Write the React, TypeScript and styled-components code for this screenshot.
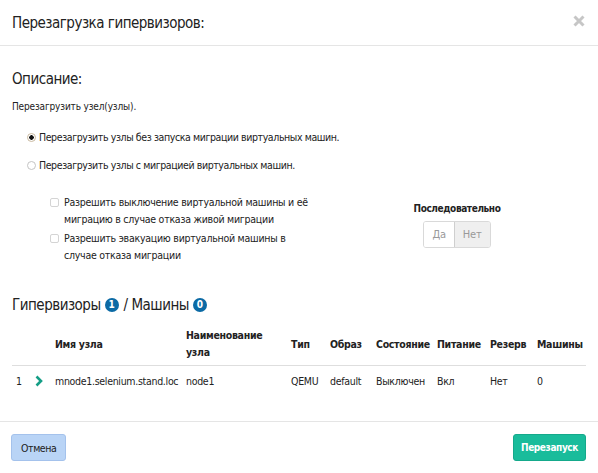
import React, { useState } from "react";
import styled, { createGlobalStyle } from "styled-components";

const FONT = `"Liberation Sans Narrow", "DejaVu Sans Condensed", "Liberation Sans", sans-serif`;

const GlobalStyle = createGlobalStyle`
  html, body {
    margin: 0;
    padding: 0;
    background: #fff;
  }
  body {
    font-family: ${FONT};
    font-stretch: condensed;
    color: #222;
  }
`;

type Node = {
  id: number;
  host: string;
  name: string;
  type: string;
  image: string;
  state: string;
  power: string;
  reserve: string;
  machines: number;
};

const NODES: Node[] = [
  {
    id: 1,
    host: "mnode1.selenium.stand.loc",
    name: "node1",
    type: "QEMU",
    image: "default",
    state: "Выключен",
    power: "Вкл",
    reserve: "Нет",
    machines: 0,
  },
];

const COLUMNS = [19, 20, 131, 105, 39, 46, 61, 53, 47, 53];

const App = () => {
  const [mode, setMode] = useState(0);
  const [sequential, setSequential] = useState(false);
  const [allowOff, setAllowOff] = useState(false);
  const [allowEvac, setAllowEvac] = useState(false);

  return (
    <>
      <GlobalStyle />
      <Modal>
        <Header>
          <Title>Перезагрузка гипервизоров:</Title>
          <CloseButton aria-label="Закрыть">
            <svg width="12" height="12" viewBox="0 0 12 12">
              <path d="M1.5 1.5 L10.5 10.5 M10.5 1.5 L1.5 10.5" stroke="#c6c6c6" strokeWidth="3" />
            </svg>
          </CloseButton>
        </Header>

        <Body>
          <SectionTitle>Описание:</SectionTitle>
          <Description>Перезагрузить узел(узлы).</Description>

          <RadioList>
            <RadioRow onClick={() => setMode(0)}>
              <Radio checked={mode === 0} />
              Перезагрузить узлы без запуска миграции виртуальных машин.
            </RadioRow>
            <RadioRow onClick={() => setMode(1)}>
              <Radio checked={mode === 1} />
              Перезагрузить узлы с миграцией виртуальных машин.
            </RadioRow>
          </RadioList>

          <Options>
            <CheckList>
              <CheckRow onClick={() => setAllowOff(!allowOff)}>
                <Checkbox checked={allowOff} />
                <span>
                  Разрешить выключение виртуальной машины и её
                  <br />
                  миграцию в случае отказа живой миграции
                </span>
              </CheckRow>
              <CheckRow onClick={() => setAllowEvac(!allowEvac)}>
                <Checkbox checked={allowEvac} />
                <span>
                  Разрешить эвакуацию виртуальной машины в
                  <br />
                  случае отказа миграции
                </span>
              </CheckRow>
            </CheckList>

            <Sequence>
              <SequenceLabel>Последовательно</SequenceLabel>
              <Toggle>
                <ToggleButton active={sequential} onClick={() => setSequential(true)}>
                  Да
                </ToggleButton>
                <ToggleButton active={!sequential} onClick={() => setSequential(false)}>
                  Нет
                </ToggleButton>
              </Toggle>
            </Sequence>
          </Options>

          <SectionTitle as="h3" $top={32}>
            Гипервизоры<Badge>1</Badge>/ Машины<Badge>0</Badge>
          </SectionTitle>

          <Table>
            <colgroup>
              {COLUMNS.map((w, i) => (
                <col key={i} style={{ width: w }} />
              ))}
            </colgroup>
            <thead>
              <tr>
                <Th />
                <Th />
                <Th>Имя узла</Th>
                <Th>
                  Наименование
                  <br />
                  узла
                </Th>
                <Th>Тип</Th>
                <Th>Образ</Th>
                <Th>Состояние</Th>
                <Th>Питание</Th>
                <Th>Резерв</Th>
                <Th>Машины</Th>
              </tr>
            </thead>
            <tbody>
              {NODES.map(node => (
                <tr key={node.id}>
                  <Td>{node.id}</Td>
                  <Td>
                    <svg width="8" height="12" viewBox="0 0 8 12">
                      <path d="M1.5 1.5 L6 6 L1.5 10.5" fill="none" stroke="#159e86" strokeWidth="2.6" />
                    </svg>
                  </Td>
                  <Td>{node.host}</Td>
                  <Td>{node.name}</Td>
                  <Td>{node.type}</Td>
                  <Td>{node.image}</Td>
                  <Td>{node.state}</Td>
                  <Td>{node.power}</Td>
                  <Td>{node.reserve}</Td>
                  <Td>{node.machines}</Td>
                </tr>
              ))}
            </tbody>
          </Table>
        </Body>

        <Footer>
          <Button variant="cancel">Отмена</Button>
          <Button variant="primary">Перезапуск</Button>
        </Footer>
      </Modal>
    </>
  );
};

const Modal = styled.div`
  width: 598px;
  height: 473px;
  display: flex;
  flex-direction: column;
  background: #fff;
  box-sizing: border-box;
`;

const Header = styled.div`
  height: 46px;
  box-sizing: border-box;
  padding: 0 13px 0 12px;
  display: flex;
  align-items: center;
  justify-content: space-between;
  border-bottom: 1px solid #e5e5e5;
  flex: none;
`;

const Title = styled.h2`
  margin: 0;
  font-size: 15px;
  letter-spacing: -0.5px;
  font-weight: normal;
  color: #222;
  line-height: 20px;
`;

const CloseButton = styled.button`
  border: none;
  background: none;
  padding: 0;
  margin-top: -4px;
  display: flex;
  cursor: pointer;
`;

const Body = styled.div`
  flex: 1;
  padding: 0 12px;
  display: flex;
  flex-direction: column;
`;

const SectionTitle = styled.h4<{ $top?: number }>`
  margin: ${p => p.$top ?? 23}px 0 0;
  font-size: 15px;
  letter-spacing: -0.5px;
  font-weight: normal;
  line-height: 20px;
  color: #222;
  display: flex;
  align-items: center;
  white-space: pre;
`;

const Description = styled.p`
  margin: 11px 0 0;
  font-size: 10px;
  letter-spacing: -0.15px;
  line-height: 14px;
`;

const RadioList = styled.div`
  margin-top: 16px;
  padding-left: 15px;
  display: flex;
  flex-direction: column;
  gap: 14px;
`;

const RadioRow = styled.label`
  display: flex;
  align-items: center;
  gap: 3px;
  font-size: 10.5px;
  letter-spacing: -0.4px;
  line-height: 14px;
  cursor: pointer;
`;

const Radio = styled.span<{ checked: boolean }>`
  width: 9px;
  height: 9px;
  box-sizing: border-box;
  border-radius: 50%;
  border: 1px solid ${p => (p.checked ? "#c9b9a0" : "#c4c4c4")};
  background: ${p => (p.checked ? "radial-gradient(circle, #111 0 2px, #fff 2.5px)" : "#fff")};
  flex: none;
`;

const Options = styled.div`
  margin-top: 22px;
  display: flex;
  align-items: center;
`;

const CheckList = styled.div`
  width: 395px;
  padding-left: 38px;
  box-sizing: border-box;
  display: flex;
  flex-direction: column;
  gap: 3px;
`;

const CheckRow = styled.label`
  display: flex;
  align-items: flex-start;
  gap: 5px;
  font-size: 10.5px;
  letter-spacing: -0.25px;
  line-height: 16.5px;
  cursor: pointer;
`;

const Checkbox = styled.span<{ checked: boolean }>`
  width: 7px;
  height: 7px;
  margin-top: 4px;
  border: 1px solid #d4d4d4;
  border-radius: 2px;
  background: ${p => (p.checked ? "#159e86" : "#fff")};
  flex: none;
`;

const Sequence = styled.div`
  width: 100px;
  margin-top: -8px;
  display: flex;
  flex-direction: column;
  align-items: center;
  gap: 5px;
`;

const SequenceLabel = styled.div`
  font-size: 10px;
  letter-spacing: -0.4px;
  font-weight: bold;
  line-height: 14px;
  color: #222;
`;

const Toggle = styled.div`
  display: flex;
  border: 1px solid #d9d9d9;
  border-radius: 3px;
  overflow: hidden;
`;

const ToggleButton = styled.button<{ active: boolean }>`
  font-family: ${FONT};
  font-stretch: condensed;
  font-size: 11px;
  letter-spacing: -0.2px;
  color: #999;
  border: none;
  border-left: 1px solid ${p => (p.active ? "#cfcfcf" : "transparent")};
  background: ${p => (p.active ? "#efefef" : "#fff")};
  height: 25px;
  padding: 0 8px;
  cursor: pointer;
  &:first-child {
    border-left: none;
  }
`;

const Badge = styled.span`
  display: inline-flex;
  align-items: center;
  justify-content: center;
  width: 14px;
  height: 14px;
  margin: 0 5px 0 4px;
  border-radius: 50%;
  background: #0b6aa5;
  color: #fff;
  font-size: 10px;
  letter-spacing: 0;
  font-weight: bold;
  line-height: 1;
`;

const Table = styled.table`
  margin-top: 8px;
  width: 574px;
  table-layout: fixed;
  border-collapse: collapse;
  font-size: 10.5px;
  letter-spacing: -0.3px;
`;

const Th = styled.th`
  text-align: left;
  font-weight: bold;
  line-height: 17px;
  padding: 4px 0 4px 4px;
  vertical-align: middle;
  border-bottom: 1px solid #dedede;
  white-space: nowrap;
`;

const Td = styled.td`
  padding: 7px 0 7px 4px;
  line-height: 16px;
  vertical-align: middle;
  white-space: nowrap;
  & > svg {
    display: block;
  }
`;

const Footer = styled.div`
  flex: none;
  border-top: 1px solid #e5e5e5;
  padding: 12px 12px 12px 11px;
  display: flex;
  justify-content: space-between;
`;

const Button = styled.button<{ variant: "cancel" | "primary" }>`
  font-family: ${FONT};
  font-stretch: condensed;
  font-size: ${p => (p.variant === "primary" ? "10px" : "10.5px")};
  letter-spacing: -0.4px;
  height: 27px;
  padding: 0 ${p => (p.variant === "primary" ? 7 : 9)}px;
  border-radius: 3px;
  cursor: pointer;
  border: 1px solid ${p => (p.variant === "primary" ? "#15a98b" : "#a4c2ec")};
  background: ${p => (p.variant === "primary" ? "#19bc9b" : "#b9d4f6")};
  color: ${p => (p.variant === "primary" ? "#fff" : "#222")};
  font-weight: ${p => (p.variant === "primary" ? "bold" : "normal")};
`;

export default App;
